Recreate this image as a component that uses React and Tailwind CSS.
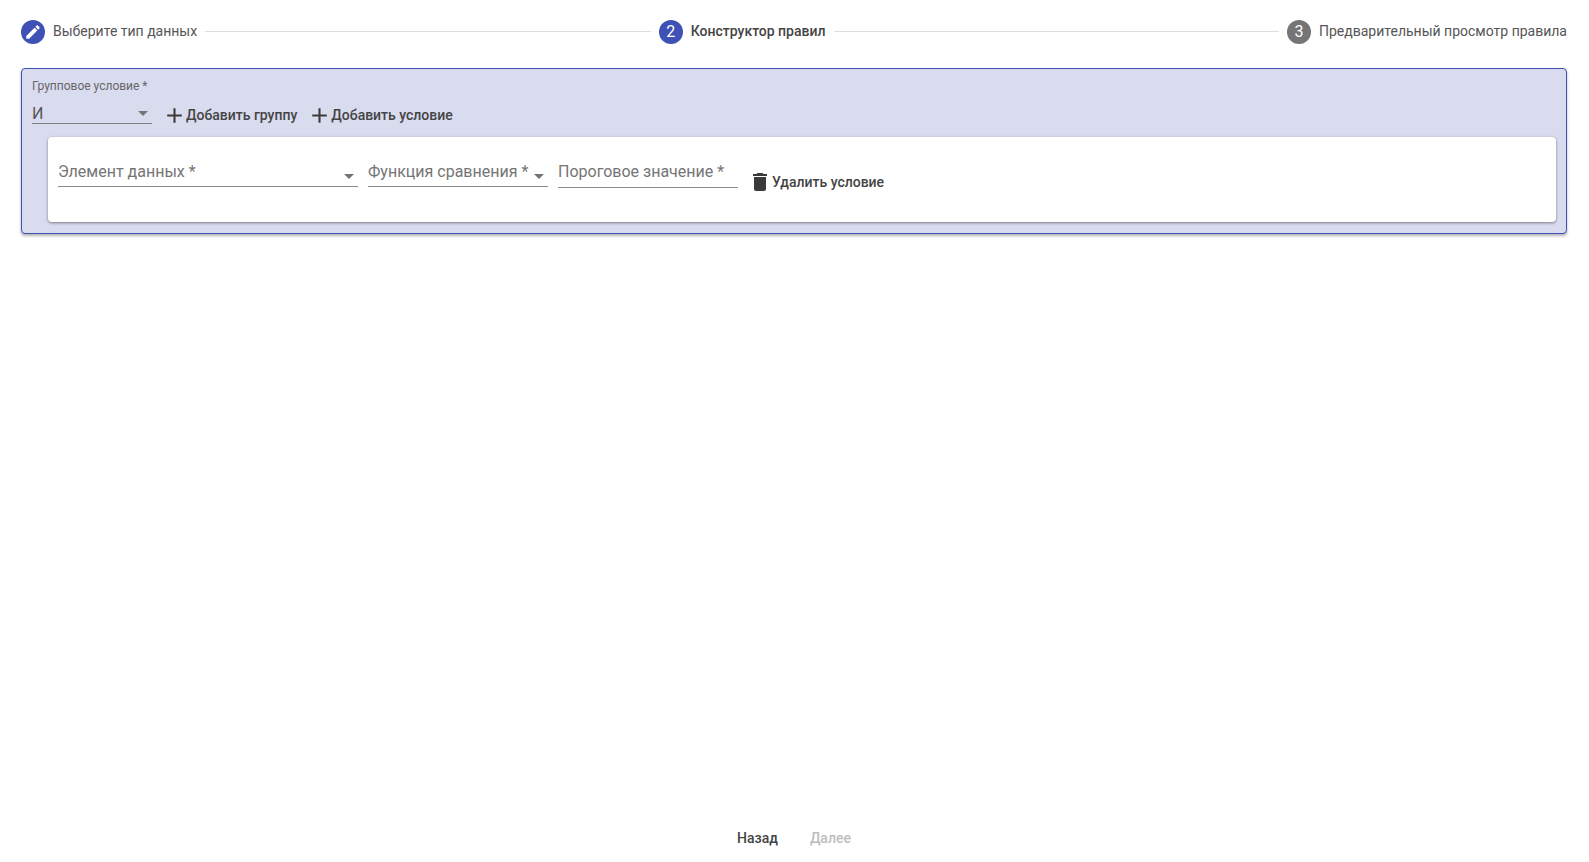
const font = { fontFamily: 'Roboto, sans-serif' };

function Caret({ className = '' }) {
  return (
    <svg width="10" height="5" viewBox="0 0 10 5" className={className}>
      <path d="M0 0l5 5 5-5z" fill="#757575" />
    </svg>
  );
}

function Plus() {
  return (
    <svg width="25" height="25" viewBox="0 0 24 24" className="-mx-1 shrink-0">
      <path d="M19 13h-6v6h-2v-6H5v-2h6V5h2v6h6v2z" fill="#3a3a3a" />
    </svg>
  );
}

function Trash() {
  return (
    <svg width="24" height="24" viewBox="0 0 24 24" className="shrink-0">
      <path d="M6 19c0 1.1.9 2 2 2h8c1.1 0 2-.9 2-2V7H6v12zM19 4h-3.5l-1-1h-5l-1 1H5v2h14V4z" fill="#3a3a3a" />
    </svg>
  );
}

function Step({ icon, label, bold, gray }) {
  return (
    <div className="flex items-center shrink-0">
      <div className={`w-6 h-6 rounded-full flex items-center justify-center text-white text-[16px] ${gray ? 'bg-[#757575]' : 'bg-[#3f51b5]'}`}>
        {icon}
      </div>
      <span className={`ml-2 text-[14px] leading-5 -mt-[2px] ${bold ? 'font-medium text-[#444]' : 'text-[#555]'}`}>{label}</span>
    </div>
  );
}

function Line() {
  return <div className="flex-1 h-px bg-[#dddddd] mx-2 -mt-[1px]" />;
}

function Field({ label, width, caret, caretClass }) {
  return (
    <div className={`relative h-[37px] border-b border-[#8a8a8a] ${width}`}>
      <span className="absolute left-0 top-[12px] text-[16px] leading-5 text-[#757575] whitespace-nowrap">{label}</span>
      {caret && <Caret className={`absolute ${caretClass}`} />}
    </div>
  );
}

export default function App() {
  return (
    <div style={font} className="h-[862px] bg-white flex flex-col px-[21px] pt-5 overflow-hidden">
      <div className="flex items-center h-6 w-[1546px]">
        <Step
          label="Выберите тип данных"
          icon={
            <svg width="18" height="18" viewBox="0 0 24 24">
              <path d="M3 17.25V21h3.75L17.81 9.94l-3.75-3.75L3 17.25zM20.71 7.04c.39-.39.39-1.02 0-1.41l-2.34-2.34c-.39-.39-1.02-.39-1.41 0l-1.83 1.83 3.75 3.75 1.83-1.83z" fill="#fff" />
            </svg>
          }
        />
        <Line />
        <Step label="Конструктор правил" icon="2" bold />
        <Line />
        <Step label="Предварительный просмотр правила" icon="3" gray />
      </div>

      <div className="mt-6 w-[1546px] h-[166px] rounded border border-[#3f51b5] bg-[#d9dbef] shadow-[0_2px_3px_rgba(0,0,0,0.3)] pl-[10px] pr-[10px] pt-[10px]">
        <div className="text-[12px] leading-[14px] text-[#666]">Групповое условие *</div>
        <div className="flex items-start mt-[7px]">
          <div className="relative w-[120px] h-[24px] border-b border-[#808080] text-[16px] leading-5 text-[#555]">
            <span className="absolute left-0 top-[4px]">И</span>
            <Caret className="absolute right-[4px] top-[11px]" />
          </div>
          <div className="flex items-center h-6 ml-[14px] text-[14px] font-medium text-[#444] leading-6 mt-[3px]">
            <Plus />
            <span className="ml-[3px] mr-[14px]">Добавить группу</span>
            <Plus />
            <span className="ml-[3px]">Добавить условие</span>
          </div>
        </div>
        <div className="ml-[16px] mt-[10px] h-[85px] rounded bg-white shadow-[0_1px_3px_rgba(0,0,0,0.45)] pl-[10px] pt-[13px] flex items-start">
          <Field label="Элемент данных *" width="w-[300px]" caret caretClass="right-[4px] top-[24px]" />
          <Field label="Функция сравнения *" width="w-[180px] ml-[10px]" caret caretClass="right-[4px] top-[24px]" />
          <div className="ml-[10px]">
            <Field label="Пороговое значение *" width="w-[180px] h-[38px]" />
          </div>
          <div className="flex items-center ml-[10px] mt-[20px] h-6 text-[14px] font-medium text-[#444]">
            <Trash />
            <span>Удалить условие</span>
          </div>
        </div>
      </div>

      <div className="mt-auto mb-[14px] flex justify-center gap-[32px] text-[14px] leading-5 font-medium -ml-[1px]">
        <span className="text-[#444]">Назад</span>
        <span className="text-[#bdbdbd]">Далее</span>
      </div>
    </div>
  );
}
